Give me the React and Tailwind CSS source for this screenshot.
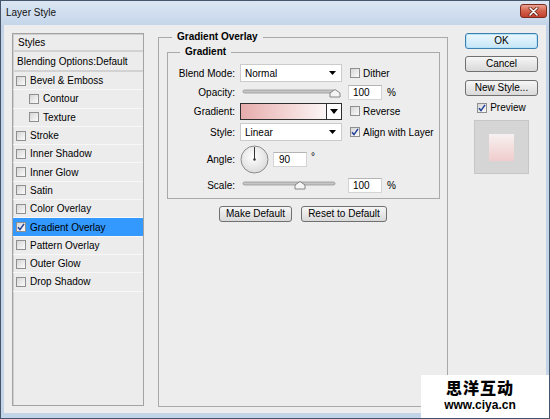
import React from "react";
import clsx from "clsx";

function Box({ checked }) {
  return (
    <span className="flex h-[10px] w-[10px] shrink-0 items-center justify-center border border-[#8e8f8f] bg-linear-to-br from-[#d6d6d6] to-[#fbfbfb]">
      {checked && (
        <svg width="8" height="8" viewBox="0 0 8 8">
          <path d="M1 4.2 L3 6.6 L7 0.9" fill="none" stroke="#22419a" strokeWidth="1.5" />
        </svg>
      )}
    </span>
  );
}

function Select({ value }) {
  return (
    <div className="flex h-[18px] w-[102px] shrink-0 items-center justify-between border border-[#cbcbcb] bg-white pl-[4px] pr-[5px]">
      <span>{value}</span>
      <svg width="7" height="4" viewBox="0 0 7 4">
        <path d="M0 0H7L3.5 4Z" fill="#000" />
      </svg>
    </div>
  );
}

function Slider({ pos }) {
  return (
    <svg width="102" height="12" viewBox="0 0 102 12" className="shrink-0">
      <rect x="3" y="3" width="92" height="3" rx="1.5" fill="#c6c6c6" stroke="#8d8d8d" strokeWidth="0.7" />
      <path
        d={`M${pos - 5} 10 V6 L${pos} 2.5 L${pos + 5} 6 V10 Z`}
        fill="#f5f5f5"
        stroke="#7c7c7c"
        strokeWidth="0.9"
      />
    </svg>
  );
}

function Num({ v, pl }) {
  return (
    <div
      className={clsx(
        "flex h-[15px] w-[34px] shrink-0 items-center border border-[#d4d4d4] border-t-[#b4b4b4] bg-white",
        pl ? "pl-[5px]" : "pl-[4px]"
      )}
    >
      {v}
    </div>
  );
}

function Btn({ children, primary, className }) {
  return (
    <div
      className={clsx(
        "flex h-[16px] items-center justify-center whitespace-nowrap rounded-[3px] border leading-none",
        primary
          ? "border-[#3c7fb1] bg-linear-to-b from-[#ecf7fd] to-[#c6e6f7] shadow-[inset_0_0_0_1px_#b8e2f8]"
          : "border-[#707070] bg-linear-to-b from-[#f6f6f6] to-[#d9d9d9]",
        className
      )}
    >
      {children}
    </div>
  );
}

const items = [
  { t: "Bevel & Emboss" },
  { t: "Contour", sub: true },
  { t: "Texture", sub: true },
  { t: "Stroke" },
  { t: "Inner Shadow" },
  { t: "Inner Glow" },
  { t: "Satin" },
  { t: "Color Overlay" },
  { t: "Gradient Overlay", on: true },
  { t: "Pattern Overlay" },
  { t: "Outer Glow" },
  { t: "Drop Shadow" },
];

function Row({ label, h, mt, children }) {
  return (
    <div className={clsx("flex items-center", h, mt)}>
      <div className="w-[67px] shrink-0 text-right">{label}</div>
      <div className="ml-[5px] flex items-center">{children}</div>
    </div>
  );
}

function Check({ label, checked }) {
  return (
    <span className="ml-[8px] flex items-center gap-[3px]">
      <Box checked={checked} />
      <span>{label}</span>
    </span>
  );
}

export default function App() {
  return (
    <div className="relative flex h-[419px] w-[550px] flex-col overflow-hidden whitespace-nowrap border border-[#46566a] bg-[#c3d4e8] font-['Liberation_Sans',Arial,sans-serif] text-[10px] text-black">
      {/* title bar */}
      <div className="flex h-[24px] shrink-0 items-start justify-between bg-linear-to-b from-[#dbe6f3] to-[#c5d6ea] pl-[5px] pr-[2px]">
        <span className="mt-[5px] text-[10px] leading-[13px] text-[#111]">Layer Style</span>
        <div className="mt-[3px] flex h-[14px] w-[27px] items-center justify-center rounded-[3px] border border-[#7d2a1f] bg-linear-to-b from-[#e9a391] via-[#d2604b] to-[#c0402d]">
          <svg width="11" height="9" viewBox="0 0 11 9">
            <path d="M2 1 L9 8 M9 1 L2 8" stroke="#5a1a10" strokeWidth="3" strokeLinecap="round" />
            <path d="M2 1 L9 8 M9 1 L2 8" stroke="#ffffff" strokeWidth="1.6" strokeLinecap="round" />
          </svg>
        </div>
      </div>

      {/* content */}
      <div className="mx-[3px] mb-[5px] flex h-[388px] shrink-0 bg-[#ededed] pl-[8px] pt-[8px]">
        {/* left panel */}
        <div className="h-[373px] w-[132px] shrink-0 border border-[#a3a3a3] bg-[#ececec] shadow-[inset_1px_1px_0_#cfcfcf]">
          <div className="flex h-[16px] items-center pl-[5px]">Styles</div>
          <div className="h-[2px] bg-[#d2d2d2]" />
          <div className="flex h-[18px] items-center pl-[4px]">Blending Options:Default</div>
          <div className="h-[2px] bg-[#d2d2d2]" />
          {items.map((it) => (
            <div
              key={it.t}
              className={clsx(
                "flex h-[18.3px] items-center gap-[4px] border-b border-[#f7f7f7]",
                it.on && "bg-[#3399ff]",
                it.sub ? "pl-[16px]" : "pl-[3px]"
              )}
            >
              <Box checked={it.on} />
              <span>{it.t}</span>
            </div>
          ))}
        </div>

        {/* main fieldset */}
        <fieldset className="ml-[14px] -mt-[3px] h-[377px] w-[290px] shrink-0 self-start border border-[#a9a9a9]">
          <legend className="ml-[13px] px-[5px] text-[10px] font-bold leading-[14px]">Gradient Overlay</legend>
          <fieldset className="ml-[8px] mt-[1px] w-[273px] border border-[#a9a9a9] pb-[4px]">
            <legend className="ml-[12px] px-[5px] text-[10px] font-bold leading-[14px]">Gradient</legend>
            <div className="pt-[5px]">
              <Row label="Blend Mode:" h="h-[18px]">
                <Select value="Normal" />
                <Check label="Dither" />
              </Row>
              <Row label="Opacity:" h="h-[17px]" mt="mt-[2px]">
                <Slider pos={95} />
                <span className="ml-[6px]">
                  <Num v="100" />
                </span>
                <span className="ml-[5px]">%</span>
              </Row>
              <Row label="Gradient:" h="h-[18px]" mt="mt-[1px]">
                <div className="flex h-[17px] w-[102px] border border-[#2f2f2f]">
                  <div className="flex-1 bg-linear-to-r from-[#e6acac] to-[#fbf6f6]" />
                  <div className="flex w-[15px] items-center justify-center border-l border-[#2f2f2f] bg-white">
                    <svg width="8" height="5" viewBox="0 0 8 5">
                      <path d="M0 0H8L4 5Z" fill="#000" />
                    </svg>
                  </div>
                </div>
                <Check label="Reverse" />
              </Row>
              <Row label="Style:" h="h-[18px]" mt="mt-[3px]">
                <Select value="Linear" />
                <Check label="Align with Layer" checked />
              </Row>
              <Row label="Angle:" h="h-[28px]" mt="mt-[4px]">
                <svg width="29" height="29" viewBox="0 0 29 29" className="shrink-0">
                  <defs>
                    <radialGradient id="dial" cx="45%" cy="40%" r="65%">
                      <stop offset="0" stopColor="#ffffff" />
                      <stop offset="1" stopColor="#d9d9d9" />
                    </radialGradient>
                  </defs>
                  <circle cx="14.5" cy="14.5" r="13.5" fill="url(#dial)" stroke="#8b8b8b" />
                  <line x1="14.5" y1="14.5" x2="14.5" y2="2" stroke="#333" strokeWidth="1" />
                  <circle cx="14.5" cy="14.5" r="1.2" fill="#333" />
                </svg>
                <span className="ml-[4px]">
                  <Num v="90" pl />
                </span>
                <span className="ml-[4px] -mt-[6px]">°</span>
              </Row>
              <Row label="Scale:" h="h-[18px]" mt="mt-[3px]">
                <Slider pos={60} />
                <span className="ml-[6px]">
                  <Num v="100" />
                </span>
                <span className="ml-[5px]">%</span>
              </Row>
            </div>
          </fieldset>
          <div className="mt-[7px] flex justify-center gap-[9px]">
            <Btn className="w-[73px]">Make Default</Btn>
            <Btn className="w-[86px]">Reset to Default</Btn>
          </div>
        </fieldset>

        {/* right column */}
        <div className="ml-[17px] flex w-[73px] shrink-0 flex-col items-center">
          <Btn primary className="w-full">OK</Btn>
          <Btn className="mt-[7px] w-full">Cancel</Btn>
          <Btn className="mt-[8px] w-full">New Style...</Btn>
          <div className="mt-[6px] flex h-[11px] items-center gap-[3px]">
            <Box checked />
            <span>Preview</span>
          </div>
          <div className="mt-[7px] flex h-[54px] w-[55px] items-center justify-center border border-[#c6c6c6] bg-[#d5d5d5]">
            <div className="h-[27px] w-[25px] bg-linear-to-b from-[#f7f1f1] to-[#f0cccc]" />
          </div>
        </div>
      </div>

      {/* watermark */}
      <div className="absolute bottom-0 right-0 flex h-[43px] w-[128px] flex-col items-center bg-white pr-[10px] pt-[3px]">
        <span className="font-['Noto_Sans_CJK_SC',sans-serif] text-[16px] font-black leading-[19px] tracking-[1px] text-black">
          思洋互动
        </span>
        <span className="mt-[1px] font-['Liberation_Sans',Arial,sans-serif] text-[12px] font-bold leading-[14px] text-black">
          www.ciya.cn
        </span>
      </div>
    </div>
  );
}
